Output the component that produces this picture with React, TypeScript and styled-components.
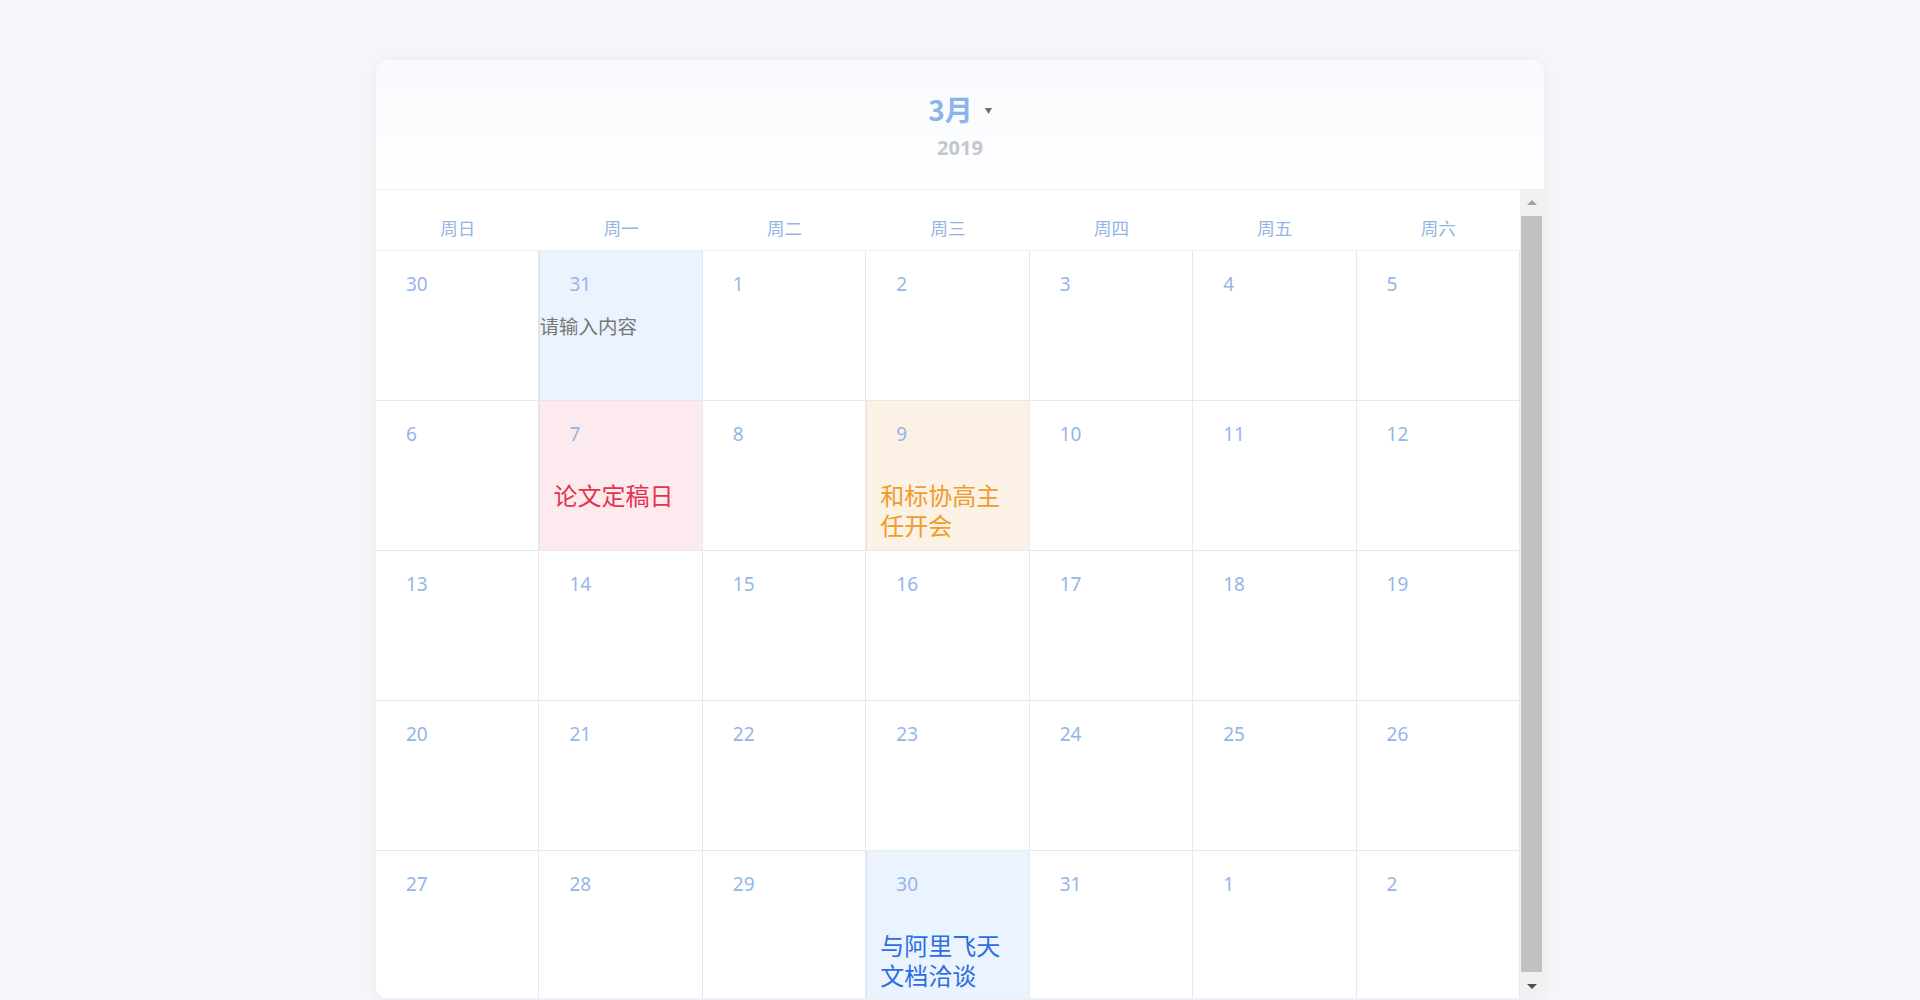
import React from "react";
import styled, { createGlobalStyle } from "styled-components";

const GlobalStyle = createGlobalStyle`
  html, body {
    margin: 0;
    padding: 0;
    background: #f5f6f9;
    overflow: hidden;
  }
  body {
    font-family: "Noto Sans", "Noto Sans CJK SC", sans-serif;
  }
  * { box-sizing: border-box; }
`;

const Page = styled.div`
  height: 1000px;
  padding-top: 60px;
`;

const Card = styled.div`
  width: 1168px;
  height: 938px;
  margin: 0 auto;
  background: #ffffff;
  border-radius: 12px;
  box-shadow: 0 2px 14px rgba(40, 50, 80, 0.06);
  overflow: hidden;
  display: flex;
  flex-direction: column;
`;

const Header = styled.header`
  flex: 0 0 130px;
  display: flex;
  flex-direction: column;
  align-items: center;
  padding-top: 30px;
  gap: 6px;
  background: linear-gradient(to bottom, #f7f9fc 0%, #ffffff 100%);
  border-bottom: 1px solid #eeeff2;
`;

const MonthLine = styled.div`
  display: flex;
  align-items: center;
  gap: 12px;
`;

const Month = styled.span`
  font-family: "Noto Sans CJK SC", sans-serif;
  font-size: 28px;
  line-height: 38px;
  font-weight: 700;
  color: #8cb3ea;
`;

const Caret = styled.svg`
  width: 7px;
  height: 6px;
  margin-top: 3px;
`;

const Year = styled.span`
  font-family: "Noto Sans", sans-serif;
  font-size: 20px;
  line-height: 28px;
  font-weight: 700;
  color: #c3c7d0;
`;

const Body = styled.div`
  flex: 1;
  min-height: 0;
  display: flex;
`;

const GridArea = styled.div`
  flex: 1;
  min-width: 0;
  overflow: hidden;
`;

const ScrollTrack = styled.div`
  flex: 0 0 24px;
  display: flex;
  flex-direction: column;
  background: #f1f1f1;
`;

const ScrollButton = styled.div`
  flex: 0 0 24px;
  display: flex;
  align-items: center;
  justify-content: center;
`;

const Arrow = styled.svg`
  width: 10px;
  height: 5px;
`;

const Thumb = styled.div`
  flex: 1;
  margin: 2px 2px 2px 1px;
  background: #c1c1c1;
`;

const WeekRow = styled.div`
  display: grid;
  grid-template-columns: repeat(7, 1fr);
  height: 61px;
  border-bottom: 1px solid #eff0f3;
`;

const WeekLabel = styled.div`
  text-align: center;
  padding-top: 26px;
  font-family: "Noto Sans CJK SC", sans-serif;
  font-size: 17.5px;
  line-height: 24px;
  color: #93b5e6;
`;

const WeekGrid = styled.div`
  display: grid;
  grid-template-columns: repeat(7, 1fr);
  height: 150px;
  border-bottom: 1px solid #e9e9ec;
`;

type Tone = "none" | "blue" | "pink" | "cream";

const toneBg: Record<Tone, string> = {
  none: "#ffffff",
  blue: "#ebf3ff",
  pink: "#fdeaee",
  cream: "#fcf1e5",
};

const toneEdge: Record<Tone, string> = {
  none: "transparent",
  blue: "#dbe3ef",
  pink: "#f2dde2",
  cream: "#efe3d6",
};

const Cell = styled.div<{ $tone: Tone }>`
  border-right: 1px solid #e9e9ec;
  background: ${(p) => toneBg[p.$tone]};
  box-shadow: inset 1px 0 0 ${(p) => toneEdge[p.$tone]};
  padding-top: 20px;
  display: flex;
  flex-direction: column;
  min-width: 0;
`;

const DayNum = styled.span`
  padding-left: 30px;
  font-family: "Noto Sans", sans-serif;
  font-size: 19px;
  line-height: 26px;
  color: #95b6e7;
`;

type EventKind = "red" | "orange" | "blue";

const eventColor: Record<EventKind, string> = {
  red: "#e5324f",
  orange: "#f09b2c",
  blue: "#2b6fe3",
};

const EventText = styled.div<{ $kind: EventKind }>`
  margin-top: 33px;
  padding: 0 16px 0 14px;
  font-family: "Noto Sans CJK SC", sans-serif;
  font-size: 24px;
  line-height: 30px;
  color: ${(p) => eventColor[p.$kind]};
  word-break: break-all;
`;

const Placeholder = styled.div`
  margin-top: 16px;
  font-family: "Noto Sans CJK SC", sans-serif;
  font-size: 19.5px;
  line-height: 26px;
  color: #777777;
`;

type Day = {
  n: number;
  tone?: Tone;
  event?: { text: string; kind: EventKind };
  placeholder?: string;
};

const weekdays = ["周日", "周一", "周二", "周三", "周四", "周五", "周六"];

const weeks: Day[][] = [
  [
    { n: 30 },
    { n: 31, tone: "blue", placeholder: "请输入内容" },
    { n: 1 },
    { n: 2 },
    { n: 3 },
    { n: 4 },
    { n: 5 },
  ],
  [
    { n: 6 },
    { n: 7, tone: "pink", event: { text: "论文定稿日", kind: "red" } },
    { n: 8 },
    { n: 9, tone: "cream", event: { text: "和标协高主任开会", kind: "orange" } },
    { n: 10 },
    { n: 11 },
    { n: 12 },
  ],
  [13, 14, 15, 16, 17, 18, 19].map((n) => ({ n })),
  [20, 21, 22, 23, 24, 25, 26].map((n) => ({ n })),
  [
    { n: 27 },
    { n: 28 },
    { n: 29 },
    { n: 30, tone: "blue", event: { text: "与阿里飞天文档洽谈", kind: "blue" } },
    { n: 31 },
    { n: 1 },
    { n: 2 },
  ],
];

export default function App() {
  return (
    <Page>
      <GlobalStyle />
      <Card>
        <Header>
          <MonthLine>
            <Month>3月</Month>
            <Caret viewBox="0 0 7 6">
              <path d="M0 0 L7 0 L3.5 6 Z" fill="#6e6e6e" />
            </Caret>
          </MonthLine>
          <Year>2019</Year>
        </Header>
        <Body>
          <GridArea>
            <WeekRow>
              {weekdays.map((w) => (
                <WeekLabel key={w}>{w}</WeekLabel>
              ))}
            </WeekRow>
            {weeks.map((week, wi) => (
              <WeekGrid key={wi}>
                {week.map((d, di) => (
                  <Cell key={di} $tone={d.tone ?? "none"}>
                    <DayNum>{d.n}</DayNum>
                    {d.placeholder && <Placeholder>{d.placeholder}</Placeholder>}
                    {d.event && (
                      <EventText $kind={d.event.kind}>{d.event.text}</EventText>
                    )}
                  </Cell>
                ))}
              </WeekGrid>
            ))}
          </GridArea>
          <ScrollTrack>
            <ScrollButton>
              <Arrow viewBox="0 0 10 5">
                <path d="M0 5 L5 0 L10 5 Z" fill="#a3a3a3" />
              </Arrow>
            </ScrollButton>
            <Thumb />
            <ScrollButton>
              <Arrow viewBox="0 0 10 5">
                <path d="M0 0 L10 0 L5 5 Z" fill="#505050" />
              </Arrow>
            </ScrollButton>
          </ScrollTrack>
        </Body>
      </Card>
    </Page>
  );
}
